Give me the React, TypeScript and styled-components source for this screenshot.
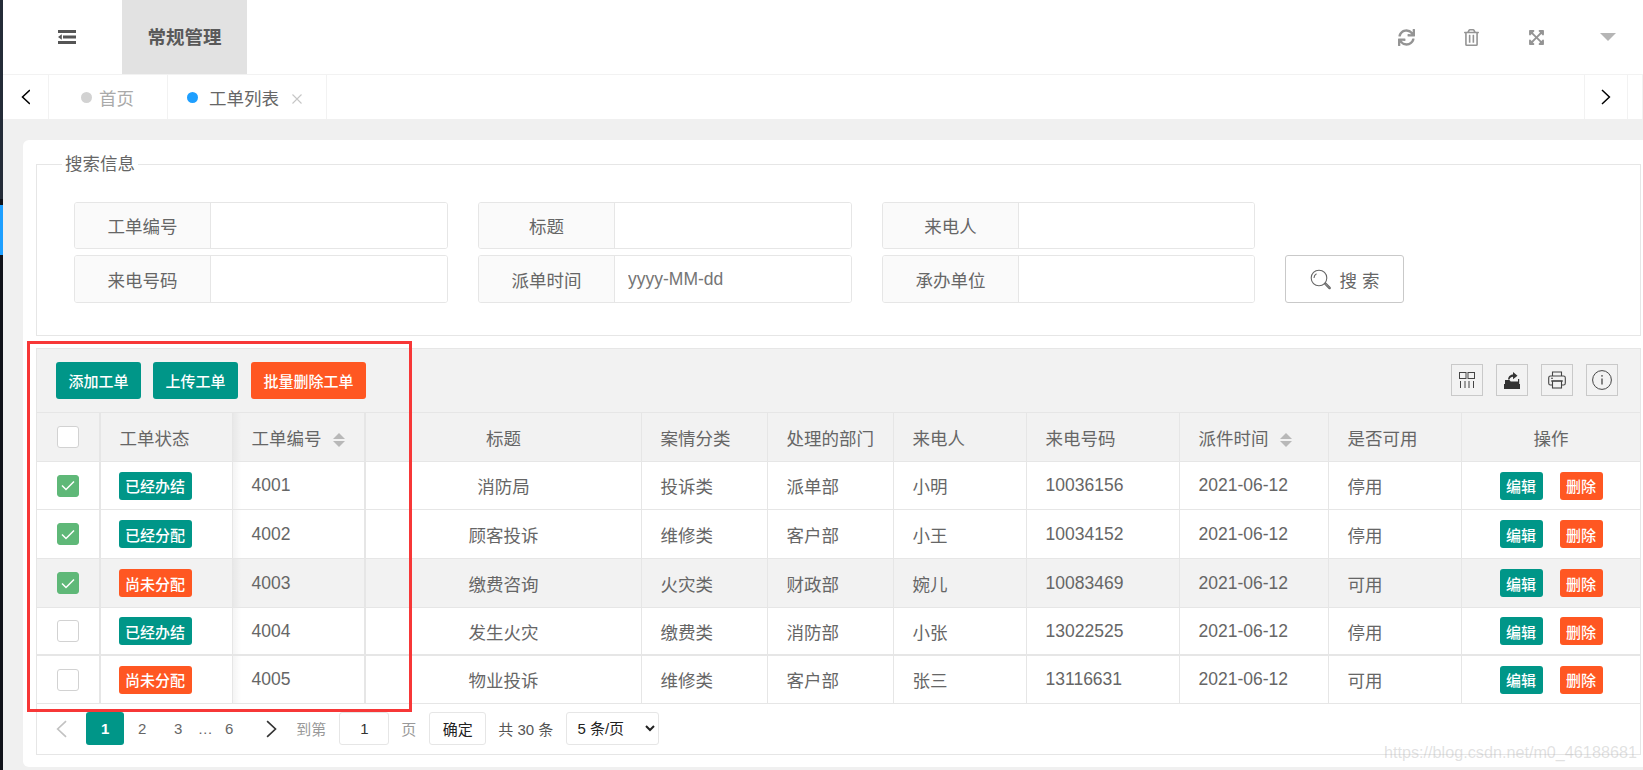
import React from "react";
import styled, { createGlobalStyle } from "styled-components";
import { FaSync, FaRegTrashAlt, FaExpandArrowsAlt } from "react-icons/fa";

const Global = createGlobalStyle`
  * { box-sizing: border-box; }
  html, body { margin: 0; padding: 0; background: #f0f0f0; }
  body { font-family: "Liberation Sans", "Noto Sans CJK SC", sans-serif; font-size: 17.5px; color: #666; }
`;

const Page = styled.div`
  position: relative;
  display: flex;
  width: 1643px;
  height: 770px;
  overflow: hidden;
  background: #f0f0f0;
`;
const Strip = styled.div`
  width: 3px;
  flex: none;
  display: flex;
  flex-direction: column;
  background: #10131a;
`;
const StripTop = styled.div`
  height: 199px;
  background: #242c38;
`;
const StripMark = styled.div`
  height: 50px;
  margin-top: 6px;
  background: #1e9fff;
`;
const Main = styled.div`
  flex: 1;
  min-width: 0;
  display: flex;
  flex-direction: column;
`;
const Header = styled.header`
  height: 75px;
  flex: none;
  display: flex;
  background: #fff;
  border-bottom: 1px solid #f2f2f2;
`;
const Toggle = styled.div`
  width: 119px;
  display: flex;
  align-items: center;
  padding-left: 55px;
  color: #555;
`;
const HeaderTab = styled.div`
  width: 125px;
  display: flex;
  align-items: center;
  justify-content: center;
  padding-bottom: 2px;
  background: #e2e2e2;
  color: #595959;
  font-weight: 700;
  font-size: 18.5px;
`;
const HeaderActions = styled.div`
  margin-left: auto;
  display: flex;
  align-items: center;
  gap: 48px;
  padding-right: 27px;
  color: #949494;
  font-size: 17px;
`;
const Caret = styled.span`
  margin-left: 7px;
  width: 0;
  height: 0;
  border-left: 8px solid transparent;
  border-right: 8px solid transparent;
  border-top: 8px solid #b5b5b5;
`;
const TabBar = styled.nav`
  height: 44px;
  flex: none;
  display: flex;
  background: #fff;
`;
const ArrowCell = styled.div<{ $w: number; $left?: boolean }>`
  width: ${(p) => p.$w}px;
  flex: none;
  display: flex;
  align-items: center;
  justify-content: center;
  color: #000;
  border-right: 1px solid #f2f2f2;
  ${(p) => (p.$left ? "border-left: 1px solid #f2f2f2; margin-left: auto;" : "")}
`;
const Tab = styled.div<{ $active?: boolean }>`
  display: flex;
  align-items: center;
  flex: none;
  width: ${(p) => (p.$active ? 159 : 119)}px;
  padding-left: ${(p) => (p.$active ? 19 : 32)}px;
  border-right: 1px solid #f2f2f2;
  color: ${(p) => (p.$active ? "#666" : "#aaa")};
`;
const Dot = styled.span<{ $active?: boolean }>`
  width: 11px;
  height: 11px;
  border-radius: 50%;
  margin-right: ${(p) => (p.$active ? 11 : 7)}px;
  background: ${(p) => (p.$active ? "#1e9fff" : "#d2d2d2")};
`;
const TabClose = styled.span`
  display: flex;
  margin: 3px 0 0 13px;
  color: #c6c6c6;
`;
const Content = styled.main`
  flex: 1;
  min-height: 0;
  padding: 21px 0 3px 20px;
  display: flex;
`;
const Card = styled.section`
  flex: 1;
  background: #fff;
  border-radius: 6px 0 0 6px;
  padding: 12px 2px 0 13px;
  display: flex;
  flex-direction: column;
`;
const SearchSet = styled.fieldset`
  margin: 0;
  height: 184px;
  padding: 26px 0 0 37px;
  border: 1px solid #e6e6e6;
  flex: none;
`;
const Legend = styled.legend`
  margin-left: -12px;
  padding: 0 3px;
  line-height: 24px;
  color: #666;
`;
const SearchGrid = styled.div`
  display: grid;
  grid-template-columns: 374px 374px 373px 119px;
  grid-template-rows: 47px 48px;
  gap: 6px 30px;
`;
const Field = styled.label`
  display: flex;
  border: 1px solid #e6e6e6;
  border-radius: 3px;
  overflow: hidden;
`;
const FieldLabel = styled.span`
  width: 136px;
  flex: none;
  display: flex;
  align-items: center;
  justify-content: center;
  background: #fafafa;
  border-right: 1px solid #e6e6e6;
  color: #666;
`;
const FieldInput = styled.input`
  flex: 1;
  min-width: 0;
  border: 0;
  outline: 0;
  padding: 0 13px;
  font: inherit;
  color: #666;
  background: #fff;
  &::placeholder { color: #757575; opacity: 1; }
`;
const SearchButton = styled.button`
  display: flex;
  align-items: center;
  justify-content: center;
  gap: 9px;
  border: 1px solid #c9c9c9;
  border-radius: 3px;
  background: #fff;
  color: #666;
  font: inherit;
  padding: 0;
`;
const TableBox = styled.div`
  margin-top: 12px;
  height: 407px;
  flex: none;
  border: 1px solid #e6e6e6;
`;
const Toolbar = styled.div`
  height: 64px;
  display: flex;
  align-items: center;
  padding: 0 22px 1px 19px;
  gap: 12px;
  background: #f2f2f2;
  border-bottom: 1px solid #e6e6e6;
`;
const ToolButton = styled.button<{ $danger?: boolean; $w: number }>`
  width: ${(p) => p.$w}px;
  height: 37px;
  border: 0;
  padding: 0;
  margin-left: ${(p) => (p.$danger ? 1 : 0)}px;
  border-radius: 3px;
  background: ${(p) => (p.$danger ? "#ff5722" : "#009688")};
  color: #fff;
  font: inherit;
  font-size: 15px;
  font-weight: 500;
`;
const ToolIcons = styled.div`
  margin-left: auto;
  display: flex;
  gap: 13px;
`;
const ToolIcon = styled.span`
  width: 32px;
  height: 32px;
  display: flex;
  align-items: center;
  justify-content: center;
  border: 1px solid #c9c9c9;
  color: #333;
`;
const Table = styled.table`
  width: 1603px;
  table-layout: fixed;
  border-collapse: separate;
  border-spacing: 0;
`;
const Row = styled.tr<{ $hl?: boolean }>`
  height: 49px;
  background: ${(p) => (p.$hl ? "#f2f2f2" : "#fff")};
  &:nth-child(1) { height: 48px; }
  &:nth-child(4) { height: 48px; }
  &:nth-child(4) td { border-bottom-width: 2px; }
  &:nth-child(5) { height: 48px; }
`;
const HeadRow = styled.tr`
  height: 49px;
  background: #f2f2f2;
`;
const cellCss = `
  padding: 0 18.5px;
  font-weight: 400;
  text-align: left;
  color: #666;
  border-right: 1px solid #e6e6e6;
  border-bottom: 1px solid #e6e6e6;
  white-space: nowrap;
  &:nth-child(1), &:nth-child(3) { border-right-width: 2px; }
  &:nth-child(1) { padding: 0; }
  &:nth-child(3) { background-image: linear-gradient(to right, rgba(0,0,0,.045), rgba(0,0,0,0) 8px); }
  &:last-child { border-right: 0; }
`;
const Th = styled.th<{ $center?: boolean }>`
  ${cellCss}
  ${(p) => (p.$center ? "text-align: center;" : "")}
`;
const Td = styled.td<{ $center?: boolean }>`
  ${cellCss}
  ${(p) => (p.$center ? "text-align: center;" : "")}
`;
const CheckBox = styled.span<{ $on?: boolean }>`
  display: flex;
  align-items: center;
  justify-content: center;
  width: 22px;
  height: 22px;
  margin: 0 auto;
  border-radius: 3px;
  border: 1px solid ${(p) => (p.$on ? "#5fb878" : "#d2d2d2")};
  background: ${(p) => (p.$on ? "#5fb878" : "#fff")};
`;
const Badge = styled.span<{ $danger?: boolean; $w?: number }>`
  display: inline-flex;
  align-items: center;
  justify-content: center;
  vertical-align: middle;
  width: ${(p) => p.$w ?? 73}px;
  height: 28px;
  border-radius: 3px;
  background: ${(p) => (p.$danger ? "#ff5722" : "#009688")};
  color: #fff;
  font-size: 15px;
  font-weight: 500;
`;
const StatusBadge = styled(Badge)`
  margin-left: -1px;
`;
const Actions = styled.div`
  display: flex;
  justify-content: center;
  gap: 17px;
`;
const SortMark = styled.span`
  display: inline-flex;
  flex-direction: column;
  gap: 2px;
  margin-left: 11px;
  vertical-align: middle;
  &::before, &::after {
    content: "";
    width: 0;
    height: 0;
    border-left: 6.5px solid transparent;
    border-right: 6.5px solid transparent;
  }
  &::before { border-bottom: 6px solid #b8b8b8; }
  &::after { border-top: 6px solid #b8b8b8; }
`;
const Pager = styled.div`
  height: 49px;
  display: flex;
  align-items: center;
  padding-left: 19px;
  font-size: 15px;
  color: #666;
`;
const PagerArrow = styled.span<{ $off?: boolean; $ml: number; $mr?: number }>`
  display: flex;
  margin-left: ${(p) => p.$ml}px;
  margin-right: ${(p) => p.$mr ?? 0}px;
  color: ${(p) => (p.$off ? "#c2c2c2" : "#333")};
`;
const PageLink = styled.span<{ $w?: number; $current?: boolean }>`
  width: ${(p) => p.$w ?? 36}px;
  height: 33px;
  display: flex;
  align-items: center;
  justify-content: center;
  border-radius: 3px;
  ${(p) => (p.$current ? "background: #009688; color: #fff; font-weight: 700; width: 38px;" : "")}
`;
const PagerNote = styled.span<{ $ml: number; $dark?: boolean }>`
  margin-left: ${(p) => p.$ml}px;
  color: ${(p) => (p.$dark ? "#555" : "#999")};
  white-space: nowrap;
`;
const PageInput = styled.input`
  width: 50px;
  height: 33px;
  margin-left: 13px;
  border: 1px solid #e6e6e6;
  border-radius: 3px;
  text-align: center;
  font: inherit;
  color: #333;
  outline: 0;
  padding: 0;
`;
const ConfirmButton = styled.button`
  width: 57px;
  height: 33px;
  margin-left: 13px;
  border: 1px solid #e6e6e6;
  border-radius: 3px;
  background: #fff;
  color: #222;
  font: inherit;
  padding: 0;
`;
const PageSize = styled.select`
  width: 93px;
  height: 33px;
  margin-left: 13px;
  padding-left: 6px;
  border: 1px solid #e6e6e6;
  border-radius: 3px;
  background-color: #fff;
  color: #222;
  font: inherit;
  outline: 0;
`;
const RedBox = styled.div`
  position: absolute;
  left: 27px;
  top: 341px;
  width: 385px;
  height: 371px;
  border: 3px solid #f73737;
  pointer-events: none;
`;
const Watermark = styled.div`
  position: absolute;
  left: 1384px;
  top: 743px;
  font-size: 16.2px;
  line-height: 18px;
  color: rgba(170, 170, 170, 0.36);
  white-space: nowrap;
  pointer-events: none;
`;

const Chevron = ({ dir, size = 16 }: { dir: "l" | "r"; size?: number }) => (
  <svg width={size * 0.62} height={size} viewBox="0 0 10 16" fill="none" stroke="currentColor" strokeWidth="1.5">
    <polyline points={dir === "l" ? "9,1 1.5,8 9,15" : "1,1 8.5,8 1,15"} />
  </svg>
);
const ToggleIcon = () => (
  <svg width="18" height="14" viewBox="0 0 18 14" fill="currentColor">
    <rect x="0" y="0" width="18" height="3" />
    <rect x="5" y="5.500" width="13" height="3" />
    <rect x="0" y="11" width="18" height="3" />
    <polygon points="0,7 3.800,4.200 3.800,9.800" />
  </svg>
);
const CloseIcon = () => (
  <svg width="10" height="10" viewBox="0 0 10 10" stroke="currentColor" strokeWidth="1.1">
    <path d="M0.5 0.5L9.5 9.500M9.500 0.5L0.5 9.500" />
  </svg>
);
const SearchIcon = () => (
  <svg width="21" height="21" viewBox="0 0 21 21" fill="none" stroke="#666" strokeWidth="1.1">
    <circle cx="9" cy="9" r="7.800" />
    <path d="M4 9a5 5 0 0 1 2.500-4.300" />
    <path d="M14.500 14.800l1-1 4.600 4.700a.7.7 0 0 1-1 1z" />
  </svg>
);
const ColsIcon = () => (
  <svg width="16" height="16" viewBox="0 0 16 16" fill="none" stroke="#444" strokeWidth="1">
    <rect x="0.5" y="0.5" width="6.500" height="6" />
    <rect x="9" y="0.5" width="6.500" height="6" />
    <path d="M1.500 9v7M6 9v7M10 9v7M14.500 9v7" />
  </svg>
);
const ExportIcon = () => (
  <svg width="16" height="18" viewBox="0 0 16 18" fill="#333">
    <path d="M1 9h4.500l1.200 1.500H14V8h1.200v5H1z" />
    <path d="M0 13h16v5H0z" />
    <path d="M4 8.500C4.400 4.800 6.800 3.600 9 3.500V1l4.500 3.700L9 8.200V5.800C7.400 5.800 6 6.800 5.500 8.500z" />
  </svg>
);
const PrintIcon = () => (
  <svg width="18" height="18" viewBox="0 0 18 18" fill="none" stroke="#444" strokeWidth="1.1">
    <path d="M4.500 5V1h9v4" />
    <path d="M4 14H2.500A1.800 1.800 0 0 1 .7 12.200V6.800A1.800 1.800 0 0 1 2.500 5h13a1.800 1.800 0 0 1 1.800 1.800v5.400A1.800 1.800 0 0 1 15.500 14H14" />
    <path d="M3 10h12" />
    <rect x="4.500" y="10" width="9" height="7" />
    <path d="M3 7.200h2" />
  </svg>
);
const InfoIcon = () => (
  <svg width="20" height="20" viewBox="0 0 20 20" fill="none" stroke="#444" strokeWidth="1">
    <circle cx="10" cy="10" r="9.400" />
    <path d="M10 8.500v6" strokeWidth="1.300" />
    <circle cx="10" cy="5.900" r=".8" fill="#444" stroke="none" />
  </svg>
);
const Check = () => (
  <svg width="14" height="11" viewBox="0 0 14 11" fill="none" stroke="#fff" strokeWidth="1.500">
    <polyline points="1,5.500 5,9.500 13,1.500" />
  </svg>
);

type RowData = {
  checked: boolean;
  status: string;
  danger: boolean;
  id: string;
  title: string;
  kind: string;
  dept: string;
  caller: string;
  phone: string;
  usable: string;
};
const rows: RowData[] = [
  { checked: true, status: "已经办结", danger: false, id: "4001", title: "消防局", kind: "投诉类", dept: "派单部", caller: "小明", phone: "10036156", usable: "停用" },
  { checked: true, status: "已经分配", danger: false, id: "4002", title: "顾客投诉", kind: "维修类", dept: "客户部", caller: "小王", phone: "10034152", usable: "停用" },
  { checked: true, status: "尚未分配", danger: true, id: "4003", title: "缴费咨询", kind: "火灾类", dept: "财政部", caller: "婉儿", phone: "10083469", usable: "可用" },
  { checked: false, status: "已经办结", danger: false, id: "4004", title: "发生火灾", kind: "缴费类", dept: "消防部", caller: "小张", phone: "13022525", usable: "停用" },
  { checked: false, status: "尚未分配", danger: true, id: "4005", title: "物业投诉", kind: "维修类", dept: "客户部", caller: "张三", phone: "13116631", usable: "可用" },
];
const widths = [64, 132, 133, 276, 126, 126, 133, 153, 149, 133, 178];
const fields = [
  { label: "工单编号" },
  { label: "标题" },
  { label: "来电人" },
];
const fields2 = [
  { label: "来电号码" },
  { label: "派单时间", placeholder: "yyyy-MM-dd" },
  { label: "承办单位" },
];

export default function App() {
  return (
    <Page>
      <Global />
      <Strip>
        <StripTop />
        <StripMark />
      </Strip>
      <Main>
        <Header>
          <Toggle><ToggleIcon /></Toggle>
          <HeaderTab>常规管理</HeaderTab>
          <HeaderActions>
            <FaSync />
            <FaRegTrashAlt />
            <FaExpandArrowsAlt />
            <Caret />
          </HeaderActions>
        </Header>
        <TabBar>
          <ArrowCell $w={46}><Chevron dir="l" /></ArrowCell>
          <Tab><Dot />首页</Tab>
          <Tab $active><Dot $active />工单列表<TabClose><CloseIcon /></TabClose></Tab>
          <ArrowCell $w={44} $left><Chevron dir="r" /></ArrowCell>
          <ArrowCell $w={15} />
        </TabBar>
        <Content>
          <Card>
            <SearchSet>
              <Legend>搜索信息</Legend>
              <SearchGrid>
                {fields.map((f) => (
                  <Field key={f.label}>
                    <FieldLabel>{f.label}</FieldLabel>
                    <FieldInput />
                  </Field>
                ))}
                <span />
                {fields2.map((f) => (
                  <Field key={f.label}>
                    <FieldLabel>{f.label}</FieldLabel>
                    <FieldInput placeholder={f.placeholder} />
                  </Field>
                ))}
                <SearchButton><SearchIcon />搜 索</SearchButton>
              </SearchGrid>
            </SearchSet>
            <TableBox>
              <Toolbar>
                <ToolButton $w={85}>添加工单</ToolButton>
                <ToolButton $w={85}>上传工单</ToolButton>
                <ToolButton $w={115} $danger>批量删除工单</ToolButton>
                <ToolIcons>
                  <ToolIcon><ColsIcon /></ToolIcon>
                  <ToolIcon><ExportIcon /></ToolIcon>
                  <ToolIcon><PrintIcon /></ToolIcon>
                  <ToolIcon><InfoIcon /></ToolIcon>
                </ToolIcons>
              </Toolbar>
              <Table>
                <colgroup>
                  {widths.map((w, i) => <col key={i} width={w} />)}
                </colgroup>
                <thead>
                  <HeadRow>
                    <Th><CheckBox /></Th>
                    <Th>工单状态</Th>
                    <Th>工单编号<SortMark /></Th>
                    <Th $center>标题</Th>
                    <Th>案情分类</Th>
                    <Th>处理的部门</Th>
                    <Th>来电人</Th>
                    <Th>来电号码</Th>
                    <Th>派件时间<SortMark /></Th>
                    <Th>是否可用</Th>
                    <Th $center>操作</Th>
                  </HeadRow>
                </thead>
                <tbody>
                  {rows.map((r, i) => (
                    <Row key={r.id} $hl={i === 2}>
                      <Td><CheckBox $on={r.checked}>{r.checked && <Check />}</CheckBox></Td>
                      <Td><StatusBadge $danger={r.danger}>{r.status}</StatusBadge></Td>
                      <Td>{r.id}</Td>
                      <Td $center>{r.title}</Td>
                      <Td>{r.kind}</Td>
                      <Td>{r.dept}</Td>
                      <Td>{r.caller}</Td>
                      <Td>{r.phone}</Td>
                      <Td>2021-06-12</Td>
                      <Td>{r.usable}</Td>
                      <Td>
                        <Actions>
                          <Badge $w={43}>编辑</Badge>
                          <Badge $w={43} $danger>删除</Badge>
                        </Actions>
                      </Td>
                    </Row>
                  ))}
                </tbody>
              </Table>
              <Pager>
                <PagerArrow $off $ml={0} $mr={19}><Chevron dir="l" size={18} /></PagerArrow>
                <PageLink $current>1</PageLink>
                <PageLink>2</PageLink>
                <PageLink>3</PageLink>
                <PageLink $w={18}>…</PageLink>
                <PageLink $w={30}>6</PageLink>
                <PagerArrow $ml={22}><Chevron dir="r" size={18} /></PagerArrow>
                <PagerNote $ml={19}>到第</PagerNote>
                <PageInput defaultValue="1" />
                <PagerNote $ml={12}>页</PagerNote>
                <ConfirmButton>确定</ConfirmButton>
                <PagerNote $ml={12} $dark>共 30 条</PagerNote>
                <PageSize defaultValue="5">
                  <option value="5">5 条/页</option>
                  <option value="10">10 条/页</option>
                </PageSize>
              </Pager>
            </TableBox>
          </Card>
        </Content>
      </Main>
      <RedBox />
      <Watermark>https://blog.csdn.net/m0_46188681</Watermark>
    </Page>
  );
}
